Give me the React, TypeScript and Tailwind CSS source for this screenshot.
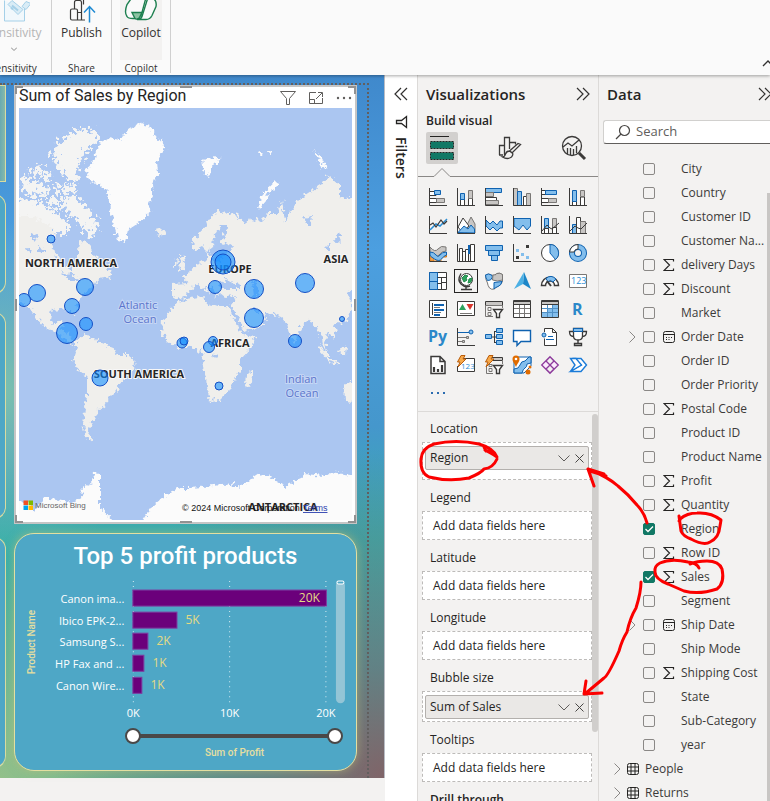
import React from "react";

const K = "#3b3a39";
const B = "#0f62b0";
const L = "#83beec";
const G = "#c8c6c4";
const D = "#797775";

function P({ d, s = K, f = "none", w = 1 }: { d: string; s?: string; f?: string; w?: number }) {
  return <path d={d} stroke={s} fill={f} strokeWidth={w} />;
}

const axes = <P d="M.5 0V17.5H18" />;

const visuals: { name: string; art: React.ReactNode }[] = [
  { name: "Stacked bar chart", art: <>{axes}<P d="M1 3.500h6v4H1M1 10.500h7v4H1" f="#fff" /><P d="M5.500 2.500h6v4h-6z" s={B} f={L} /><P d="M7.500 10.500h8v4h-8z" s={D} f={G} /></> },
  { name: "Stacked column chart", art: <>{axes}<P d="M3.500 17v-7h4v7M11.500 17v-7h4v7" f="#fff" /><P d="M3.500 5.500h4v6h-4z" s={B} f={L} /><P d="M11.500 2.500h4v8h-4z" s={D} f={G} /></> },
  { name: "Clustered bar chart", art: <><P d="M.5 .5h16v4h-16z" s={B} f={L} /><P d="M.5 4.500h8v4h-8z" s={D} f={G} /><P d="M.5 9.500h11v3h-11z" f="#fff" /><P d="M.5 12.500h13v4h-13z" s={D} f={G} />{axes}</> },
  { name: "Clustered column chart", art: <><P d="M.5 .5h4v17h-4z" s={D} f={G} /><P d="M4.500 3.500h4v14h-4z" s={B} f={L} /><P d="M10.500 8.500h3v9h-3z" f="#fff" /><P d="M13.500 5.500h4v12h-4z" s={D} f={G} />{axes}</> },
  { name: "100% stacked bar chart", art: <>{axes}<P d="M1 2.500h5v4H1M1 10.500h7v4H1" f="#fff" /><P d="M4.500 2.500h11v4h-11z" s={B} f={L} /><P d="M7.500 10.500h8v4h-8z" s={D} f={G} /></> },
  { name: "100% stacked column chart", art: <>{axes}<P d="M3.500 17v-4h4v4M11.500 17V9h4v8" f="#fff" /><P d="M3.500 2.500h4v11h-4z" s={B} f={L} /><P d="M11.500 2.500h4v6h-4z" s={D} f={G} /></> },
  { name: "Line chart", art: <>{axes}<P d="M1 14 7 8l4 2 7-7" s="#2a8dd4" w={1.5} /><P d="M1 9 4 7l3 4 5-7 3 4 3-3" w={1.2} /></> },
  { name: "Area chart", art: <><P d="M9 11 14 1l4 7v9H9z" s={D} f={G} /><P d="M1 11 6 2l6 8-7 6z" f="#fff" /><P d="M1 16.500 7 10l4 3 3-4 3.500 4v4z" s={B} f={L} />{axes}</> },
  { name: "Stacked area chart", art: <><P d="M1 4 5 8 8 5l4 4 3-4h2.500v7H15l-3 3-4-4-3 3-4-4z" s={B} f={L} />{axes}</> },
  { name: "100% stacked area chart", art: <><P d="M1 2.500h16.500V10L14 14l-4-5-4 5-5-4z" s={B} f={L} />{axes}</> },
  { name: "Line and stacked column chart", art: <><P d="M3.500 2.500h4v15h-4z" s={B} f={L} /><P d="M11.500 2.500h4v15h-4z" s={D} f={G} /><P d="M3.500 12.500h4v5h-4zM11.500 11.500h4v6h-4z" f="#fff" /><P d="M1 15 6 9l3 3 2 1 7-6" />{axes}</> },
  { name: "Line and clustered column chart", art: <><P d="M3.500 8.500h4v9h-4z" s={B} f={L} /><P d="M7.500 1.500h4v16h-4z" f="#fff" /><P d="M11.500 5.500h5v12h-5z" s={D} f={G} /><P d="M1 15 6 10l3 2 3 1 6-6" />{axes}</> },
  { name: "Ribbon chart", art: <><P d="M1 3q5 6 8 2t8-2v4q-4 0-7 4T1 8z" s={D} f={G} /><P d="M1 10h4v7H1zM14 9h3.500v4H14zM7 13h5v4H7z" s="#d97a1a" f="#f0a04a" /><P d="M1 8q4 0 6 3t4 0 6.500-3v3q-3 1-5 4t-7 0T1 11z" s={B} f={L} />{axes}</> },
  { name: "Waterfall chart", art: <><P d="M2.500 4.500h3v13h-3zM5.500 7.500h3v10M8.500 17V5.500h3V17M13.500 17V.5h4V17" f="#fff" /><P d="M11.500 1v9M12.500 1v9" s={B} f={L} />{axes}</> },
  { name: "Funnel", art: <><P d="M.5 1.500h17v5H.5zM3.500 6.500h11v5h-11zM6.500 11.500h6v5h-6z" s={B} f={L} /></> },
  { name: "Scatter chart", art: <>{axes}<P d="M3 5h3v3H3zM8 9h3v3H8zM13 12h3v3h-3z" s="none" f={L} /><P d="M13 1h3v3h-3zM3 12h3v3H3z" s="none" f={K} /></> },
  { name: "Pie chart", art: <><circle cx="9" cy="9" r="8.500" fill="#fff" stroke={K} /><P d="M9 .5A8.500 8.500 0 0 1 14.500 15.500L9 9z" s={B} f={L} /></> },
  { name: "Donut chart", art: <><circle cx="9" cy="9" r="6" fill="none" stroke={B} strokeWidth="6" /><circle cx="9" cy="9" r="6" fill="none" stroke={L} strokeWidth="4" /><P d="M.5 8A8.500 8.500 0 0 1 9 .5V5A4 4 0 0 0 5 8z" f="#fff" /></> },
  { name: "Treemap", art: <><P d="M.5 .5h17v17H.5z" f="#fff" /><P d="M.5 .5h8v17h-8zM.5 9.500h8" s={B} f={L} /><P d="M8.500 5.500h9M12.500 5.500v12M8.500 11.500h4M12.500 10.500h5" /></> },
  { name: "Map", art: <><circle cx="9.500" cy="7.500" r="6" fill="#fff" stroke={K} /><P d="M5 6l3-3 3 1-2 2 1 2-3 2zM12 7l3-1-1 4-3 1z" s="#238a4b" f="#2ea35d" /><P d="M4 1.500Q0 8 4 12t9 2M9 14v3M4 17.500h11" w={1.400} /></> },
  { name: "Filled map", art: <><P d="M.5 3q3-2 6 0t5-1.500q3-1 6 1V9q-1 4-4 5t-4 3q-3 1-5-1-2-3-2-5-2-3-2-8z" s={D} f="#fff" /><P d="M.5 3q3-2 6 0l1 2-2 3-3 .5Q.5 6 .5 3z" s={B} f={L} /><P d="M8 3q4 0 4-1.500 3-1 5.500 1V8l-5 1-5-1z" s={D} f={G} /><P d="M9 10.500l8-1q-1 4-4 5t-4 2.500z" s={B} f={L} /></> },
  { name: "Azure map", art: <><path d="M11 0 18 17 10 12z" fill="#1c86c8" /><path d="M11 0 1 17l9-5z" fill="#4cb0e4" /></> },
  { name: "Gauge", art: <><P d="M.5 13.500A8.500 8.500 0 0 1 17.500 13.500H13.500A4.500 4.500 0 0 0 4.500 13.500z" f="#fff" w={1.500} /><P d="M5 6.500Q10 2 15 7l-3 3Q9 7 7 10z" s={B} f={L} /><P d="M6 9l4 5" w={2} /></> },
  { name: "Card", art: <><P d="M.5 2.500h17v13H.5z" s={D} f="#fff" /><text x="2" y="12" fontSize="9" fill="#2a8dd4" fontFamily="Open Sans, sans-serif">123</text></> },
  { name: "Multi-row card", art: <><P d="M.5 .5h17v17H.5z" f="#fff" /><P d="M3.500 3v12" /><P d="M5 5h10M5 10h10M5 15h6" s={B} w={2} /><P d="M5 7.500h6M5 12.500h7" s={D} /></> },
  { name: "KPI", art: <><P d="M.5 1.500h17v14H.5z" f="#fff" /><path d="M2 10 5.500 4 9 10z" fill="#2ea35d" /><path d="M9.500 4h7L13 10z" fill="#d9362c" /><P d="M3 13.500h12" s={D} /></> },
  { name: "Slicer", art: <><P d="M.5 1.500h17v4H.5z" f={G} /><P d="M8 16.500H.5v-11h17V8M3 7.500h3v3H3zM3 12.500h3v3H3z" s={D} /><P d="M8.500 9.500h9l-3 4v4h-3v-4z" f="#fff" w={1.400} /></> },
  { name: "Table", art: <><P d="M.5 .5h17v17H.5z" f="#fff" /><P d="M.5 1.500h17v3H.5z" f={G} /><P d="M1 8.500h16M1 13.500h16M6.500 5v12M11.500 5v12" s={D} /></> },
  { name: "Matrix", art: <><P d="M.5 .5h17v17H.5z" f="#fff" /><P d="M1 12h6V8h4V5h6v12H1z" s="none" f={L} /><P d="M.5 1.500h17v3H.5z" f={G} /><P d="M1 8.500h16M1 12.500h16M6.500 5v12M11.500 5v12" s="#4f8fc4" /></> },
  { name: "R script visual", art: <text x="3" y="15" fontSize="16" fontWeight="700" fill="#2b88c9" fontFamily="Open Sans, sans-serif">R</text> },
  { name: "Python visual", art: <text x="-1" y="14" fontSize="16" fontWeight="700" fill="#2b88c9" fontFamily="Open Sans, sans-serif">Py</text> },
  { name: "Key influencers", art: <>{axes}<P d="M1 4.500h11M1 9.500h8M1 13.500h4" s={D} /><P d="M1 4.500h11" s={B} /><circle cx="14" cy="4" r="2" stroke={B} fill={L} /><P d="M9.500 8.500h2v2h-2zM5.500 12.500h2v2h-2z" s={D} f={G} /></> },
  { name: "Decomposition tree", art: <><P d="M5 9h7M9.500 3v12M9 3.500h3M9 14.500h3" /><P d="M.5 6.500h6v4h-6zM11.500 .5h6v4h-6zM11.500 6.500h6v4h-6zM11.500 12.500h6v4h-6z" s={B} f={L} /></> },
  { name: "Q&A", art: <P d="M.5 2.500h17v11H8l-4 4v-4H.5z" s={B} f="#fff" w={1.400} /> },
  { name: "Narrative", art: <><P d="M3.500 4V.5h8l4 4v13h-12v-7M11.500 .5v4h4" f="#fff" /><circle cx="3" cy="7" r="2" fill={L} stroke={B} /><P d="M7 8.500h5M5 11.500h8" s={B} /></> },
  { name: "Goals", art: <><P d="M4.500 .5h9V8q0 4-4.500 4T4.500 8zM4.500 3.500H.5q0 5 4 5M13.500 3.500h4q0 5-4 5" f="#fff" w={1.300} /><P d="M4.500 .5h9v3h-9z" s={B} f={L} /><P d="M9 12v3M5.500 15.500h7v2h-7z" w={1.400} /></> },
  { name: "Paginated report", art: <><P d="M2 .5h9l5 5v12H2zM11 .5v5h5" f="#fff" w={1.500} /><P d="M5 16v-5M9 16v-3M13 16V9" w={2.200} /></> },
  { name: "Card (new)", art: <><P d="M4 2.500h13.500v13H.5V10" f="#fff" /><text x="4" y="13" fontSize="8" fill="#2a8dd4" fontFamily="Open Sans, sans-serif">123</text><P d="M4 -.5h4L6 3h3L1 11l2-5H.5z" s="#b95c0a" f="#f7a94a" /></> },
  { name: "Slicer (new)", art: <><P d="M7 1.500h10.500v3H8" f={G} /><P d="M8 17.500H1.500V10M17.500 4v4M4 8.500h3v2H4zM4 12.500h3v3H4z" s={D} /><P d="M8.500 9.500h9l-3 4v4h-3v-4z" f="#fff" w={1.400} /><P d="M4 -.5h4L6 3h3L1 11l2-5H.5z" s="#b95c0a" f="#f7a94a" /></> },
  { name: "ArcGIS map", art: <><P d="M1 1h17v9l-7 7H1z" s={B} f="#fff" /><P d="M18 1v6l-4 1q0 3-2 4t-3 5H1V13q5 0 6-4t5-4l4-4z" s={B} f={L} /><path d="M-.5 3a3.500 3.500 0 0 1 7 0c0 3-2 4-3.500 8C1.500 7-.5 6-.5 3z" fill="#e06c00" /><circle cx="3" cy="3" r="1.300" fill="#fff" /><circle cx="17" cy="11" r="1.500" fill="#e06c00" /><circle cx="15" cy="16" r="2.500" fill="#e06c00" /></> },
  { name: "Power Apps", art: <><P d="M9 .7 17.300 9 9 17.300.7 9zM5 5l8 8M13 5l-8 8M9 .7 5 5l4 4 4-4zM9 9l-4 4 4 4 4-4z" s="#8d3a9c" f="#fbeafd" w={1.300} /></> },
  { name: "Power Automate", art: <><P d="M5 2.500h7l5.500 6.500L12 15.500H1.500L12 9z" s="#1a7bd8" f="#fff" w={1.400} /><P d="M1.500 2.500H7L12.500 9 1.500 15.500 6 9z" s="#1a7bd8" f="#fff" w={1.400} /></> },
];

const fields: { name: string; sum?: boolean; date?: boolean; on?: boolean }[] = [
  { name: "City" }, { name: "Country" }, { name: "Customer ID" }, { name: "Customer Na..." },
  { name: "delivery Days", sum: true }, { name: "Discount", sum: true }, { name: "Market" },
  { name: "Order Date", date: true }, { name: "Order ID" }, { name: "Order Priority" },
  { name: "Postal Code", sum: true }, { name: "Product ID" }, { name: "Product Name" },
  { name: "Profit", sum: true }, { name: "Quantity", sum: true }, { name: "Region", on: true },
  { name: "Row ID", sum: true }, { name: "Sales", sum: true, on: true }, { name: "Segment" },
  { name: "Ship Date", date: true }, { name: "Ship Mode" }, { name: "Shipping Cost", sum: true },
  { name: "State" }, { name: "Sub-Category" }, { name: "year" },
];

const bubbles: [number, number, number][] = [
  [51, 239, 4], [37, 293, 8.5], [24, 300, 6.5], [85, 287, 8.500], [72, 306, 7.500], [86, 324, 6.500],
  [67, 333, 10.500], [100, 378, 8], [182, 343, 5], [184, 341, 4], [213, 341, 4.500], [209, 347, 5.500],
  [219, 386, 4], [254, 318, 9.500], [295, 341, 6.500], [342, 319, 2.500], [305, 283, 9.500],
  [254, 289, 9.500], [215, 287, 6.500], [223, 262, 12], [223, 262, 8],
];

function WorldMap() {
  return (
    <svg viewBox="19 108 333 412" preserveAspectRatio="xMidYMid slice" className="block w-full" role="img" aria-label="Map of sales by region">
      <defs>
        <filter id="coast" x="-5%" y="-5%" width="110%" height="110%">
          <feTurbulence type="fractalNoise" baseFrequency="0.25" numOctaves="3" seed="4" result="n" />
          <feDisplacementMap in="SourceGraphic" in2="n" scale="9" xChannelSelector="R" yChannelSelector="G" />
        </filter>
        <filter id="isles" x="-10%" y="-10%" width="120%" height="120%">
          <feTurbulence type="fractalNoise" baseFrequency="0.25" numOctaves="3" seed="9" result="n" />
          <feDisplacementMap in="SourceGraphic" in2="n" scale="22" xChannelSelector="R" yChannelSelector="G" />
        </filter>
      </defs>
      <path d="M0 90H380V540H0z" fill="#abc6f1" />
      <g filter="url(#isles)" fill="#f4f4f3">
        <path d="M64 138 78 129 96 131 100 140 88 150 82 158 76 172 80 180 68 182 62 172 54 162 53 150z" />
        <path d="M55 186 74 184 76 192 58 194zM30 168 40 166 42 174 34 176zM22 176 36 182 48 188 46 198 32 196 20 188z" />
        <path d="M42 170 52 172 50 180 42 178zM48 196 58 198 58 208 48 206zM36 186 44 184 46 192 38 194z" />
        <path d="M64 198 78 196 86 208 96 218 98 232 90 236 80 224 72 218 62 208z" />
        <path d="M16 198 32 200 46 206 58 214 68 222 68 234 52 234 30 230 14 220z" />
      </g>
      <g filter="url(#coast)" fill="#f0efec">
        <path d="M8 216 30 216 44 222 52 228 56 236 52 244 54 252 62 264 72 270 78 262 78 250 79 240 88 243 94 256 106 268 110 276 98 278 94 286 86 291 80 300 76 308 75 317 70 311 60 309 52 310 50 320 55 325 61 320 63 325 59 329 68 333 72 341 80 343 78 346 68 341 56 332 46 328 37 318 30 309 24 304 8 296z" />
        <path d="M104 270 112 272 110 278 104 276z" />
        <path d="M78 338 87 335 100 342 113 348 117 355 128 355 136 362 132 372 123 380 117 390 110 397 105 407 98 410 97 417 92 423 89 433 93 442 86 437 83 423 85 410 87 397 87 378 78 370 73 360 77 347z" />
        <path d="M181 300 203 296 207 304 218 306 228 306 232 315 237 325 243 335 255 337 252 347 240 360 240 373 233 383 228 392 220 400 210 401 207 387 206 377 202 363 203 354 192 346 180 349 168 342 162 333 163 320 172 307z" />
        <path d="M252 370 254 378 249 387 245 386 246 376z" />
        <path d="M172 284 188 283 182 276 192 270 200 263 207 261 207 253 211 254 212 261 222 260 227 254 232 247 228 244 222 246 224 234 229 226 222 226 214 236 213 248 208 252 202 246 194 250 192 241 203 229 212 216 220 211 238 216 244 223 252 219 260 221 268 213 278 213 282 200 285 223 293 207 305 195 323 183 328 175 340 185 340 197 365 200 365 285 348 291 352 302 352 307 347 320 337 323 334 326 336 333 333 338 327 332 325 342 327 350 322 345 320 333 312 322 307 320 300 328 296 343 290 336 287 323 280 317 266 312 267 318 260 326 245 332 238 318 231 306 237 296 225 297 220 293 216 297 212 288 206 286 211 295 203 288 197 284 191 289 185 297 177 299 172 296z" />
        <path d="M180 254 184 256 186 268 178 271 181 264zM174 261 178 260 177 267 173 267zM156 231 164 229 166 234 158 236z" />
        <path d="M318 345 333 360 330 362 318 349zM331 361 341 363 340 365 331 363zM339 349 347 345 346 355 340 355zM344 384 365 378 365 404 345 401z" />
      </g>
      <g filter="url(#coast)" fill="#fbfbfb">
        <path d="M100 143 110 138 120 140 128 130 140 123 150 125 155 135 166 147 160 155 157 163 158 173 152 187 153 195 148 205 151 213 140 222 128 230 125 242 117 240 115 227 110 210 108 193 100 185 90 182 85 170 93 163 95 153z" />
        <path d="M202 160 212 157 222 159 214 164 208 176 204 174zM313 150 319 154 328 170 322 166zM276 181 280 182 268 194 261 210 258 206 264 192zM256 153 260 151 262 153 258 155zM267 151 272 150 273 153 268 154z" />
        <path d="M10 503 27 502 35 511 43 498 57 500 72 502 82 498 83 487 92 483 95 473 100 472 100 507 114 522 142 522 152 507 167 493 180 488 190 488 235 484 240 488 250 479 259 473 272 478 287 487 305 474 323 476 330 472 365 477V540H10z" />
      </g>
      <g filter="url(#coast)" fill="#abc6f1">
        <path d="M219 284 227 279 231 283 240 285 240 289 222 289z" />
        <path d="M252 281 257 283 259 296 254 296z" />
        <path d="M253 306 260 311 259 315 253 310zM212 356 215 353 217 358zM60 272 72 274 80 281 70 281zM335 240 339 232 342 240 338 244zM304 218 312 216 311 224 306 224z" />
        <path d="M30 232 38 234 36 240 30 238zM38 246 44 248 44 254 38 252zM26 250 30 248 32 254zM324 250 330 244 330 250z" />
      </g>
      <g className="font-['Open_Sans',sans-serif] text-[11px]" fill="#5b75cc" stroke="#c5d6f5" strokeWidth="2" paintOrder="stroke" textAnchor="middle">
        <text x="138" y="309">Atlantic</text>
        <text x="140" y="323">Ocean</text>
        <text x="301" y="383">Indian</text>
        <text x="302" y="397">Ocean</text>
      </g>
      <g className="font-['Open_Sans',sans-serif] text-[11px] font-bold" fill="#252525" stroke="#f7f7f7" strokeWidth="2" paintOrder="stroke" textAnchor="middle">
        <text x="71" y="267">NORTH AMERICA</text>
        <text x="139" y="378">SOUTH AMERICA</text>
        <text x="230" y="273">EUROPE</text>
        <text x="336" y="263">ASIA</text>
        <text x="230" y="347">AFRICA</text>
        <text x="283" y="511">ANTARCTICA</text>
      </g>
      {bubbles.map(([x, y, r], i) => (
        <circle key={i} cx={x} cy={y} r={r} fill="#118dff" fillOpacity="0.6" stroke="#1550c5" />
      ))}
      <path d="M23.500 500.500h4.500v4.500h-4.500z" fill="#f25022" />
      <path d="M28.500 500.500h4.500v4.500h-4.500z" fill="#7fba00" />
      <path d="M23.500 505.500h4.500v4.500h-4.500z" fill="#00a4ef" />
      <path d="M28.500 505.500h4.500v4.500h-4.500z" fill="#ffb900" />
      <g className="font-['Liberation_Sans',sans-serif]">
        <text x="35" y="508" className="text-[8px]" fill="#666">Microsoft Bing</text>
        <text x="182" y="511" className="text-[9px]" fill="#111">© 2024 Microsoft Corporation</text>
        <text x="303" y="511" className="text-[9px] underline" fill="#2b3fae">Terms</text>
      </g>
    </svg>
  );
}

const bars = [
  { label: "Canon ima...", y: 590, w: 193, v: "20K", vx: 298 },
  { label: "Ibico EPK-2...", y: 612, w: 44, v: "5K", vx: 185 },
  { label: "Samsung S...", y: 633, w: 15, v: "2K", vx: 156 },
  { label: "HP Fax and ...", y: 655, w: 11, v: "1K", vx: 152 },
  { label: "Canon Wire...", y: 677, w: 9, v: "1K", vx: 150 },
];

function ProfitChart() {
  return (
    <svg viewBox="15 578 340 146" className="block w-full font-['Open_Sans',sans-serif] text-[12px]" role="img" aria-label="Sum of Profit by Product Name">
      <path d="M133 581V704M229 581V704M325 581V704" stroke="#d5ecf3" strokeDasharray="1 4" />
      {bars.map((b) => (
        <g key={b.label}>
          <rect x="132.500" y={b.y} width={b.w} height="16" fill="#6b007b" stroke="#7d3ca0" strokeWidth="1" />
          <text x="124" y={b.y + 13} textAnchor="end" fill="#fff" className="text-[11px]">{b.label}</text>
          <text x={b.vx} y={b.y + 12} fill="#e4da84">{b.v}</text>
        </g>
      ))}
      <g fill="#fff" textAnchor="middle" className="text-[11px]">
        <text x="133" y="717">0K</text>
        <text x="229" y="717">10K</text>
        <text x="325" y="717">20K</text>
      </g>
      <text transform="translate(35 642) rotate(-90)" textAnchor="middle" fill="#e6dfa0" className="font-['Roboto',sans-serif] text-[10px] font-medium">Product Name</text>
      <rect x="335" y="581" width="9" height="122" rx="4.500" fill="#94c5d6" />
      <rect x="336" y="581" width="7" height="3" rx="1.500" fill="#4ea7c6" stroke="#fff" />
    </svg>
  );
}

const thumb =
  "pointer-events-none absolute inset-0 m-0 h-4 w-full appearance-none bg-transparent [&::-webkit-slider-thumb]:h-4 [&::-webkit-slider-thumb]:w-4 [&::-webkit-slider-thumb]:appearance-none [&::-webkit-slider-thumb]:rounded-full [&::-webkit-slider-thumb]:border-2 [&::-webkit-slider-thumb]:border-[#4a4848] [&::-webkit-slider-thumb]:bg-white";

function Handles() {
  const c = "absolute border-[#929292]";
  return (
    <>
      <span className={c + " -left-px -top-px size-2 border-l-2 border-t-2"} />
      <span className={c + " -right-px -top-px size-2 border-r-2 border-t-2"} />
      <span className={c + " -bottom-px -left-px size-2 border-b-2 border-l-2"} />
      <span className={c + " -bottom-px -right-px size-2 border-b-2 border-r-2"} />
      <span className={c + " -top-px left-1/2 w-3 -translate-x-1/2 border-t-2"} />
      <span className={c + " -bottom-px left-1/2 w-3 -translate-x-1/2 border-b-2"} />
      <span className={c + " -left-px top-1/2 h-3 -translate-y-1/2 border-l-2"} />
      <span className={c + " -right-px top-1/2 h-3 -translate-y-1/2 border-r-2"} />
    </>
  );
}

function Chevrons({ left = false }: { left?: boolean }) {
  return (
    <svg viewBox="0 0 14 14" className="size-[14px]" fill="none" stroke="#323130" strokeWidth="1.200">
      {left ? <path d="M7 1 1 7l6 6M13 1 7 7l6 6" /> : <path d="M1 1l6 6-6 6M7 1l6 6-6 6" />}
    </svg>
  );
}

function Ribbon() {
  return (
    <header className="relative z-10 h-[75px] shrink-0 bg-[#fafafa] text-[#323130] shadow-[0_1px_3px_rgba(0,0,0,0.35)]">
      <div className="flex h-full items-start">
        <div className="-ml-[24px] flex h-[73px] w-[76px] flex-col items-center border-r border-[#d0d0d0]">
          <button disabled className="flex h-[60px] w-full shrink-0 flex-col items-center text-[12px] leading-4 text-[#b5b5b5]">
            <svg viewBox="0 0 32 24" className="h-[25px] w-8 shrink-0" fill="none" stroke="#a5d0e8">
              <path d="M6.500 0v20.500h20V8" fill="#f1f8fc" />
              <path d="M10 4 14 0 25 9l-5 5zM24 6l4-5 5 2-5 6z" fill="#d9ecf6" />
              <path d="M14 5l6 5M13 7l2 2" strokeWidth="2" />
            </svg>
            <span>Sensitivity</span>
            <svg viewBox="0 0 6 4" className="mt-[6px] h-1 w-[6px]" fill="none" stroke="#888"><path d="M0 .5l3 3 3-3" /></svg>
          </button>
          <span className="text-[10px] leading-4">Sensitivity</span>
        </div>
        <div className="flex h-[73px] w-[60px] flex-col items-center border-r border-[#d0d0d0]">
          <button className="flex h-[60px] shrink-0 flex-col items-center text-[12px] leading-4">
            <svg viewBox="0 0 28 24" className="h-[25px] w-7 shrink-0" fill="none" stroke="#3b3a39" strokeWidth="1.200">
              <path d="M9.500 19.500V10q0-1.500-1.500-1.500H4Q2.500 8.500 2.500 10v8q0 1.500 1.500 1.500h13M6.500 8V2q0-2 2-2h3q2 0 2 2v17.500M9.500 12h4M15.500-1v5" />
              <path d="M21.500 22V7M16 12l5.500-6 5.500 6" stroke="#1f8ad2" strokeWidth="1.500" />
            </svg>
            <span>Publish</span>
          </button>
          <span className="text-[10px] leading-4">Share</span>
        </div>
        <div className="flex h-[73px] w-[59px] flex-col items-center border-r border-[#d0d0d0]">
          <button className="flex h-[60px] w-[42px] shrink-0 flex-col items-center bg-[#f3f2f1] text-[12px] leading-4">
            <svg viewBox="0 0 34 24" className="h-[25px] w-[34px] shrink-0" fill="none" stroke="#1d7f4f" strokeWidth="1.400">
              <path d="M8-3 3 4Q0 12 3 16q1 2 6 2h9q-2-3 0-6l4-15" fill="#fafafa" />
              <path d="M8 12h10l-2 4q-2 4-5 2z" fill="#8cc3a2" />
              <path d="M24-2l5 0q4 2 3 8l-4 9q-2 4-6 4h-9q4 0 5-3l5-16z" fill="#fafafa" />
            </svg>
            <span>Copilot</span>
          </button>
          <span className="text-[10px] leading-4">Copilot</span>
        </div>
        <button aria-label="Collapse ribbon" className="-mr-1 ml-auto self-end pb-2">
          <svg viewBox="0 0 12 7" className="block h-[7px] w-3" fill="none" stroke="#323130" strokeWidth="1.300"><path d="M1 6l5-5 5 5" /></svg>
        </button>
      </div>
    </header>
  );
}

function Canvas() {
  const side = "w-3 shrink-0 self-end border border-[#d9dba0]";
  return (
    <main className="flex min-w-0 flex-1 flex-col bg-[#f3f2f1]">
      <div className="h-[703px] border-r border-[#b9bcc4] bg-[radial-gradient(circle_at_100%_100%,#806468_0,rgba(110,110,120,0.7)_110px,transparent_330px),radial-gradient(circle_at_0_100%,#92c08a_0,rgba(120,185,140,0.6)_130px,transparent_220px),radial-gradient(circle_at_0_45%,#7cc0ae_0,transparent_170px),linear-gradient(180deg,#4089cc_0,#4c9fe0_25%,#4597cc_50%,#38aeaa_66%,#4fb09c_100%)] pt-2">
        <div className="mr-[15px] flex h-full gap-2 border-r-2 border-t-2 border-dotted border-[#625f5f]">
          <div className="flex w-[6px] flex-col items-end overflow-hidden">
            <div className={side + " h-[97px] bg-linear-to-r from-[#4a9bb8] to-[#86b9a9]"} />
            <div className={side + " mt-3 h-[100px] rounded-r-xl bg-[#4ea7c6]"} />
            <div className={side + " mt-[18px] h-[207px] rounded-r-xl bg-[#4ea7c6]"} />
            <div className={side + " mt-[18px] h-[231px] rounded-r-xl bg-[#4ea7c6]"} />
          </div>
          <div className="mr-[10px] flex min-w-0 flex-1 flex-col gap-[9px]">
            <section className="relative border-2 border-[#c6c6c6] bg-white px-[3px] pb-[2px]">
              <Handles />
              <div className="flex h-[21px] items-start">
                <h2 className="flex-1 whitespace-nowrap font-['Roboto',sans-serif] text-[16px] leading-[18px] text-[#252423]">Sum of Sales by Region</h2>
                <div className="flex h-full items-center gap-3 text-[#605e5c]">
                  <button aria-label="Filters on this visual"><svg viewBox="0 0 16 16" className="block size-4" fill="none" stroke="currentColor"><path d="M.5 1.500h15l-6 7v6h-3v-6z" /></svg></button>
                  <button aria-label="Focus mode"><svg viewBox="0 0 16 14" className="block h-[14px] w-4" fill="none" stroke="currentColor"><path d="M8 1.500H1.500v11h13V7M1.500 8.500h5v4M8 8l6-6M10 1.500h4.500V6" /></svg></button>
                  <button aria-label="More options"><svg viewBox="0 0 16 4" className="block h-1 w-4" fill="currentColor"><circle cx="2" cy="2" r="1.200" /><circle cx="8" cy="2" r="1.200" /><circle cx="14" cy="2" r="1.200" /></svg></button>
                </div>
              </div>
              <WorldMap />
            </section>
            <section className="rounded-[20px] border border-[#e3dfa0] bg-[#4ea7c6] pb-[9px] shadow-[0_0_10px_rgba(190,190,120,0.6)]">
              <h2 className="pb-[8px] pt-[8px] text-center font-['Roboto',sans-serif] text-[24px] font-medium leading-7 text-white">Top 5 profit products</h2>
              <ProfitChart />
              <div className="relative ml-[110px] mr-[13px] mt-1 h-4">
                <div className="mx-2 h-full py-[6px]"><div className="h-1 bg-[#4a4848]" /></div>
                <input type="range" aria-label="Profit range start" defaultValue={0} className={thumb} />
                <input type="range" aria-label="Profit range end" defaultValue={100} className={thumb} />
              </div>
              <p className="ml-[98px] mt-[1px] text-center font-['Roboto',sans-serif] text-[10px] font-medium leading-4 text-[#e6dfa0]">Sum of Profit</p>
            </section>
          </div>
        </div>
      </div>
    </main>
  );
}

function FiltersRail() {
  return (
    <aside className="flex w-[33px] shrink-0 flex-col items-center border-r border-[#dcdad8] bg-white pt-3">
      <button aria-label="Expand filters"><Chevrons left /></button>
      <svg viewBox="0 0 14 14" className="mt-[14px] size-[14px] rotate-90" fill="none" stroke="#252423" strokeWidth="1.300"><path d="M1.500 1.500h11l-4 5v5h-3v-5z" /></svg>
      <h2 className="mt-2 text-[14px] font-semibold leading-4 text-[#252423] [writing-mode:vertical-rl]">Filters</h2>
    </aside>
  );
}

function Well({ title, value, tall = false }: { title: string; value?: string; tall?: boolean }) {
  return (
    <div>
      <h4 className="pl-3 text-[12px] leading-4">{title}</h4>
      {value ? (
        <div className={"ml-1 mt-[5px] border border-dashed border-[#bdbbb9] bg-white px-[2px] pt-[3px] " + (tall ? "h-[38px]" : "h-[31px]")}>
          <div className="flex h-6 items-center rounded-[2px] border border-[#b3b0ad] bg-[#eae8e6] pl-1 pr-1 text-[12px]">
            <span className="flex-1">{value}</span>
            <button aria-label={value + " options"} className="mr-[5px]"><svg viewBox="0 0 12 7" className="block h-[7px] w-3" fill="none" stroke="#605e5c"><path d="M.5 .5 6 6l5.500-5.500" /></svg></button>
            <button aria-label={"Remove " + value}><svg viewBox="0 0 9 9" className="block size-[9px]" fill="none" stroke="#484644"><path d="M.5 .5l8 8M8.500 .5l-8 8" /></svg></button>
          </div>
        </div>
      ) : (
        <div className="ml-1 mt-[5px] h-[29px] border border-dashed border-[#bdbbb9] bg-white pl-[10px] text-[12px] leading-[27px]">Add data fields here</div>
      )}
    </div>
  );
}

function Visualizations() {
  return (
    <aside className="flex w-[181px] shrink-0 flex-col border-r border-[#dcdad8] bg-[#f3f2f1] text-[#252423]">
      <div className="flex items-center justify-between pl-2 pr-2 pt-[7px]">
        <h2 className="text-[15px] font-semibold leading-6">Visualizations</h2>
        <button aria-label="Collapse visualizations"><Chevrons /></button>
      </div>
      <h3 className="pl-2 pt-[7px] text-[12px] font-semibold leading-4">Build visual</h3>
      <div className="mt-[3px] flex h-8 items-center justify-between pl-2 pr-[11px]">
        <button aria-label="Build visual" className="flex size-8 items-center justify-center rounded-[2px] bg-[#d2d0ce]">
          <svg viewBox="0 0 24 26" className="h-[26px] w-6"><path d="M0 1.500h19" stroke="#252423" /><path d="M.5 6.500h23v7H.5zM.5 17.500h23v7H.5z" fill="#117865" stroke="#252423" strokeDasharray="2 1" /></svg>
        </button>
        <button aria-label="Format visual">
          <svg viewBox="0 0 24 26" className="h-[26px] w-6" fill="none" stroke="#3b3a39" strokeWidth="1.300"><path d="M1.500 20V10.500h5V20M6.500 14V2.500h5V14M11.500 7.500h6v2M1 20h4" /><path d="M22.500 9.500 14 18l-2.500-2L20 8.500zM11.500 16q-3 0-4 3-1 3-3 3 5 3 9 0 2-2 1-4z" fill="#f3f2f1" /></svg>
        </button>
        <button aria-label="Analytics">
          <svg viewBox="0 0 26 26" className="size-[26px]" fill="none" stroke="#3b3a39" strokeWidth="1.300"><circle cx="11" cy="11" r="9.500" /><path d="M2 12l5-4 4 3 7-6M6.500 19v-6M9.500 20v-7M12.500 20v-6M15.500 18v-7" /><path d="M18 18l6 6" strokeWidth="3" /></svg>
        </button>
      </div>
      <svg viewBox="0 0 182 14" preserveAspectRatio="xMinYMid slice" className="h-[14px] w-full shrink-0" fill="none" stroke="#8a8886"><path d="M0 12.500h16l8-8 8 8h200" /></svg>
      <div className="ml-[6px] mt-[5px] grid w-[168px] grid-cols-6">
        {visuals.map((v) => (
          <button key={v.name} aria-label={v.name} className={"flex h-7 w-7 items-center justify-center " + (v.name === "Map" ? "outline outline-[#252423] -outline-offset-3" : "")}>
            <svg viewBox="0 0 18 18" className="size-[18px] overflow-visible">{v.art}</svg>
          </button>
        ))}
        <button aria-label="Get more visuals" className="flex h-7 w-7 items-center justify-center">
          <svg viewBox="0 0 16 2" className="h-[2px] w-4" fill="#2b6cb0"><path d="M1 0h2v2H1zM7 0h2v2H7zM13 0h2v2h-2z" /></svg>
        </button>
      </div>
      <div className="mt-1 flex min-h-0 flex-1 border-t border-[#dcdad8] pt-[2px]">
        <div className="flex min-w-0 flex-1 flex-col gap-[10px] overflow-hidden pt-[7px]">
          <Well title="Location" value="Region" tall />
          <Well title="Legend" />
          <Well title="Latitude" />
          <Well title="Longitude" />
          <Well title="Bubble size" value="Sum of Sales" />
          <Well title="Tooltips" />
          <h3 className="pl-3 text-[12px] font-semibold leading-4">Drill through</h3>
        </div>
        <div className="h-[318px] w-[6px] rounded-full bg-[#d0cecc]" />
      </div>
    </aside>
  );
}

function Expand() {
  return <svg viewBox="0 0 7 12" className="h-3 w-[7px] shrink-0" fill="none" stroke="#8a8886"><path d="M.5 .5 6 6l-5.500 5.500" /></svg>;
}

function DataPanel() {
  return (
    <aside className="flex w-[171px] shrink-0 flex-col bg-[#f3f2f1] text-[#3b3a39]">
      <div className="flex items-center justify-between pl-2 pt-[7px]">
        <h2 className="text-[15px] font-semibold leading-6 text-[#252423]">Data</h2>
        <button aria-label="Collapse data" className="mr-[-2px]"><Chevrons /></button>
      </div>
      <label className="ml-1 mt-[14px] flex h-6 shrink-0 items-center rounded-l-[3px] border border-r-0 border-[#d1d0ce] border-b-[#605e5c] bg-white pl-[11px]">
        <svg viewBox="0 0 16 16" className="size-4 shrink-0" fill="none" stroke="#484644" strokeWidth="1.200"><circle cx="9.500" cy="6.500" r="5" /><path d="M6 10l-5 5" /></svg>
        <input type="text" placeholder="Search" aria-label="Search" className="ml-[5px] w-full min-w-0 bg-transparent text-[13px] outline-none placeholder:text-[#605e5c]" />
      </label>
      <div className="mt-[13px] flex min-h-0 flex-1 overflow-hidden">
        <div className="min-w-0 flex-1">
          {fields.map((f) => (
            <label key={f.name} className="flex h-6 items-center pl-[30px] text-[12px]">
              <span className="flex w-[14px] shrink-0">{f.date && <Expand />}</span>
              <span className="relative size-3 shrink-0">
                <input type="checkbox" defaultChecked={f.on} className="block size-3 appearance-none rounded-[2px] border border-[#8a8886] checked:border-[#117865] checked:bg-[#117865]" />
                {f.on && <svg viewBox="0 0 12 12" className="pointer-events-none absolute inset-0 size-3" fill="none" stroke="#fff" strokeWidth="1.300"><path d="M2.500 6 5 8.500l5-5" /></svg>}
              </span>
              <span className="ml-2 flex w-[18px] shrink-0">
                {f.sum && <svg viewBox="0 0 12 12" className="size-3" fill="none" stroke="#252423" strokeWidth="1.200"><path d="M10.500 2.500v-2H1l5.500 5.500L1 11.500h9.500v-2" /></svg>}
                {f.date && <svg viewBox="0 0 12 12" className="size-3" fill="none" stroke="#252423"><rect x=".5" y=".5" width="11" height="11" rx="2" /><path d="M.5 3.500h11" /><path d="M3 6.500h7M3 8.500h5" strokeDasharray="1 1.500" /></svg>}
              </span>
              <span className="whitespace-nowrap">{f.name}</span>
            </label>
          ))}
          {["People", "Returns"].map((t) => (
            <button key={t} className="flex h-6 w-full items-center pl-[15px] text-[12px]">
              <Expand />
              <svg viewBox="0 0 12 12" className="ml-[6px] mr-[6px] size-3" fill="none" stroke="#252423"><rect x=".5" y=".5" width="11" height="11" rx="2" /><path d="M.5 4h11M.5 8h11M4 .5v11M8 .5v11" /></svg>
              <span>{t}</span>
            </button>
          ))}
        </div>
        <div className="mt-[36px] w-[3px] bg-[#c8c6c4]" />
      </div>
    </aside>
  );
}

function Markup() {
  return (
    <svg viewBox="0 0 770 801" className="pointer-events-none absolute left-0 top-0 z-20 h-[801px] w-[770px]" fill="none" stroke="#fb0000" strokeWidth="3" strokeLinecap="round" strokeLinejoin="round">
      <path d="M484 447l2 4M485 450q5 2 12 7-4-9-18-13-23-5-45 0-12 4-13 15-1 14 8 18 20 5 40 1 12-5 15-9 9-1 13-10" />
      <path d="M647 523Q644 512 637 505 629 495 618 486 608 477 588 469M588 469l6 17M588 469l16 5M590 471l16 5" />
      <path d="M641 582Q641 592 636 608 630 618 627 632 622 640 619 651 608 676 604 678 598 683 586 693M586 681l-2 13 18-1" />
      <path d="M679 516l2 15q2 5 10 8 13 7 19 3 9-4 10-16l1-6q-10-8-24-7-10 0-17 6 0 3-1 2" />
      <path d="M699 568q-2-5-11-6-17-4-28 1-6 3-5 9 0 7 13 12l16 7q15 4 33-2 8-6 5-20-3-8-15-8-10 0-17 3" />
    </svg>
  );
}

export default function App() {
  return (
    <div className="relative flex h-screen flex-col overflow-hidden bg-[#f3f2f1] font-['Open_Sans','Noto_Sans',sans-serif]">
      <Ribbon />
      <div className="flex min-h-0 flex-1">
        <Canvas />
        <FiltersRail />
        <Visualizations />
        <DataPanel />
      </div>
      <Markup />
    </div>
  );
}
